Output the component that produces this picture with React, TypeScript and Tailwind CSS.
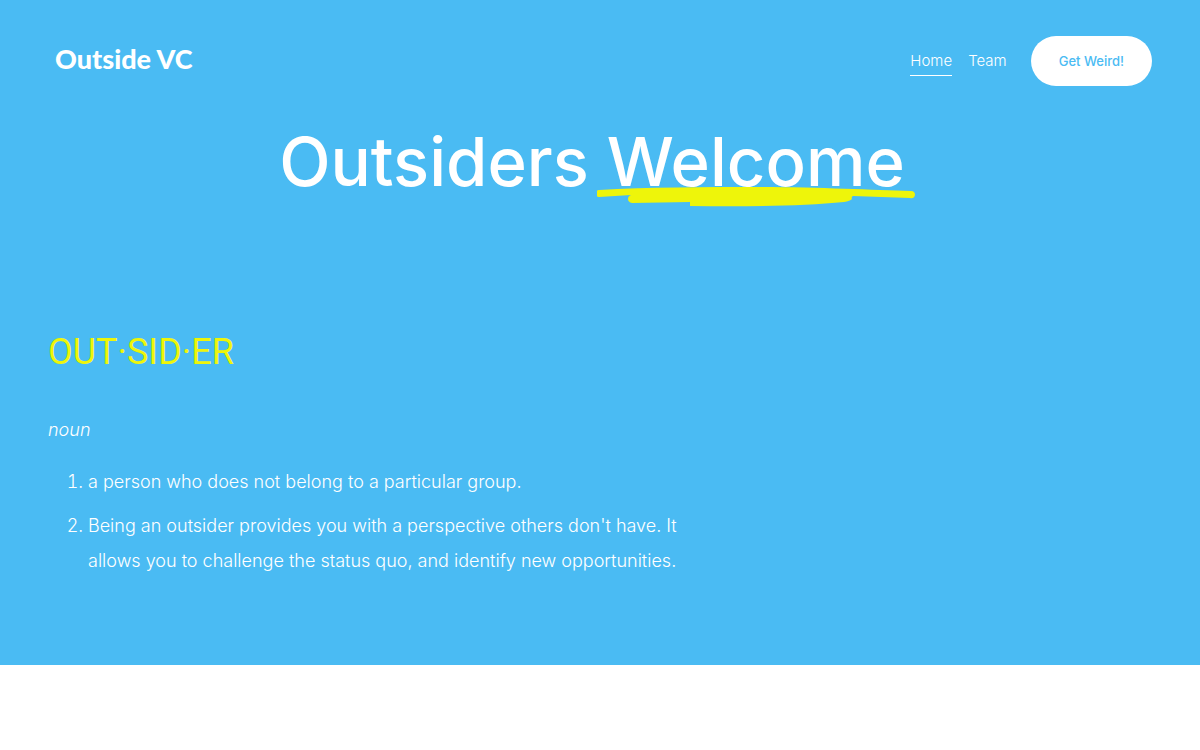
const definitions = [
  'a person who does not belong to a particular group.',
  "Being an outsider provides you with a perspective others don't have. It allows you to challenge the status quo, and identify new opportunities.",
];

function Header() {
  return (
    <header className="flex items-center justify-between px-12 pt-9">
      <a
        href="#"
        className="pb-1 pl-[7px] font-['Lato',sans-serif] text-[27px] leading-8 font-black"
      >
        Outside VC
      </a>
      <nav className="flex items-center gap-6 font-['Inter',sans-serif]">
        <div className="flex gap-4 text-[15px] leading-7 font-light">
          <a href="#home" aria-current="page" className="border-b border-white">
            Home
          </a>
          <a href="#team">Team</a>
        </div>
        <a
          href="#contact"
          className="rounded-full bg-white px-7 py-4 text-[13px] leading-[18px] font-medium text-[#4abbf3]"
        >
          Get Weird!
        </a>
      </nav>
    </header>
  );
}

function Scribble() {
  return (
    <svg
      viewBox="0 0 318 21"
      className="absolute top-full left-1/2 h-[21px] w-[318px] -translate-x-1/2"
      fill="#eef50a"
      aria-hidden="true"
    >
      <path d="M0 5 Q0 4 2 4 C50 1 110 1 160 1 C220 1 275 4 314 5 Q318 5 318 9 Q317 13 313 12 L256 10 Q254 11 255 13 Q253 15 247 16 C205 20 150 21 93 20 V16 L35 17 Q31 16 31 13 Q31 10 34 9 L2 11 Q0 11 0 10 Z" />
    </svg>
  );
}

export default function App() {
  return (
    <div className="min-h-screen bg-white">
      <main className="bg-[#4abbf3] pb-[78px] font-['Inter',sans-serif] text-white">
        <Header />
        <h1 className="pt-8 pr-4 text-center text-[67px] leading-[88px] font-medium">
          Outsiders{' '}
          <span className="relative inline-block leading-12">
            Welcome
            <Scribble />
          </span>
        </h1>
        <section className="w-3/5 pt-[122px] pl-12 text-[18px] leading-[35px] font-light">
          <h2 className="font-['Roboto',sans-serif] text-4xl leading-12 font-normal text-[#eef50a]">
            OUT·SID·ER
          </h2>
          <p className="pt-9 italic">noun</p>
          <ol className="list-decimal pt-[17px] pl-10">
            {definitions.map((text) => (
              <li key={text} className="pb-[9px]">
                {text}
              </li>
            ))}
          </ol>
        </section>
      </main>
    </div>
  );
}
